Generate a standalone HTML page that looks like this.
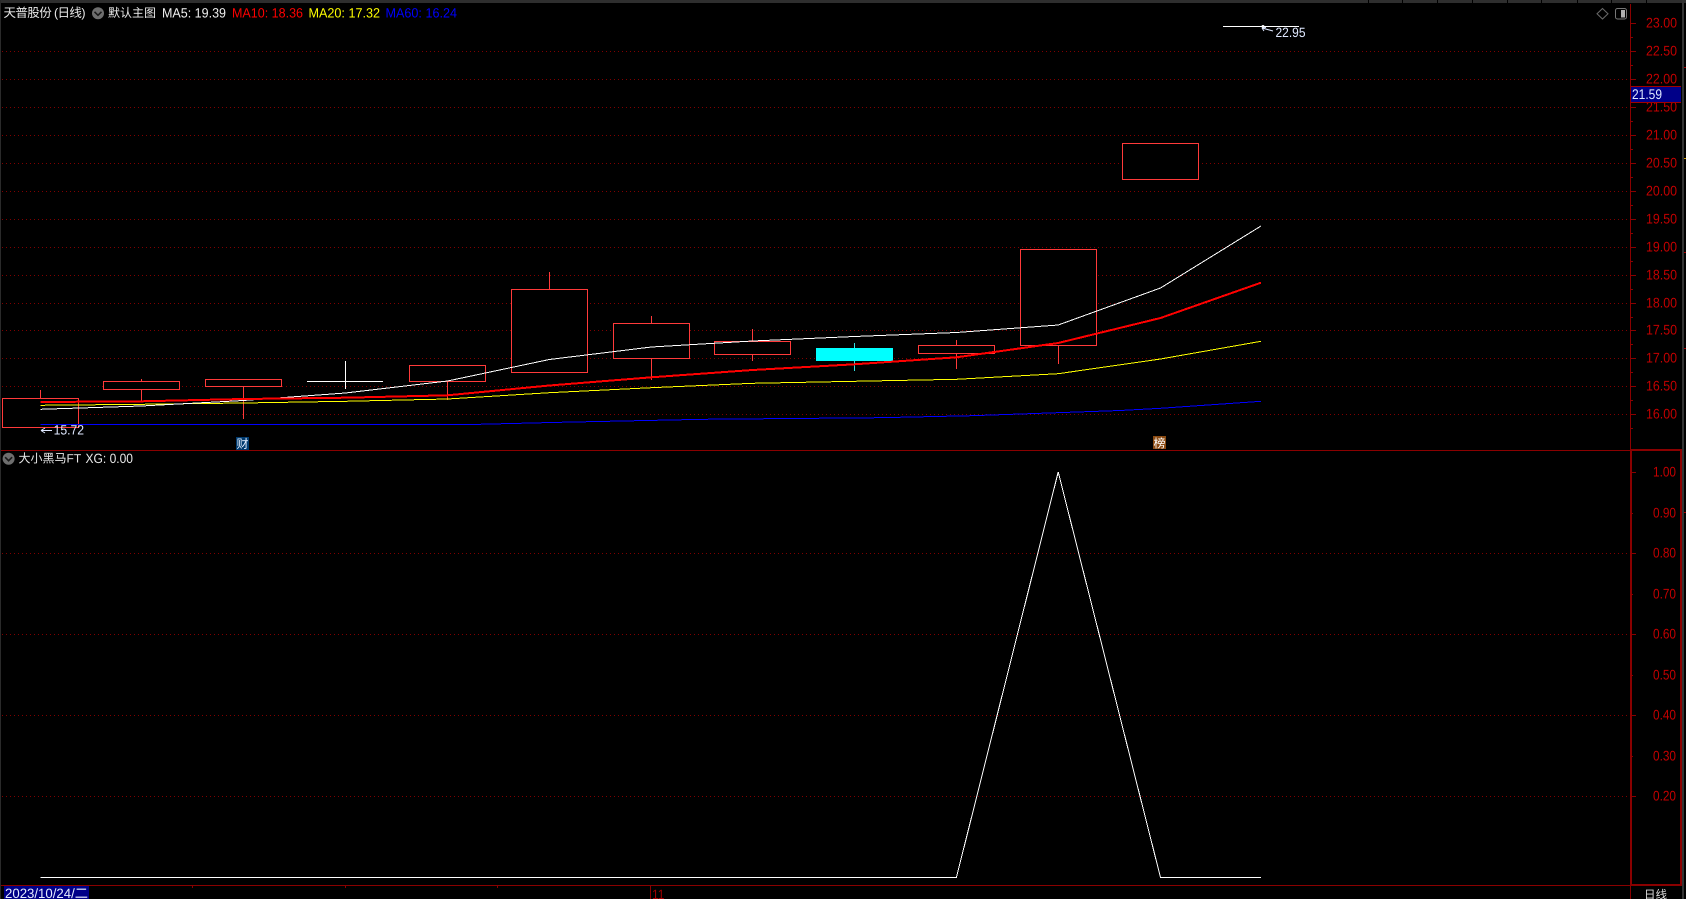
<!DOCTYPE html>
<html lang="zh">
<head>
<meta charset="utf-8">
<title>天普股份 (日线)</title>
<style>
html,body{margin:0;padding:0;background:#000;width:1686px;height:899px;overflow:hidden}
svg{display:block;position:absolute;left:0;top:0}
text{font-family:"Liberation Sans","Noto Sans CJK SC",sans-serif;font-size:13.5px;text-rendering:geometricPrecision}
.ax text{fill:#c40000;font-size:14px}
.c{stroke:#ff3a3a;fill:#000;stroke-width:1}
.w{stroke:#ff3a3a;stroke-width:1}
.g{stroke:#800000;stroke-width:1;stroke-dasharray:1 3}
.t{stroke:#8a0000;stroke-width:1}
.cr{shape-rendering:crispEdges}
</style>
</head>
<body>
<svg width="1686" height="899" viewBox="0 0 1686 899">
<rect width="1686" height="899" fill="#000"/>

<!-- window chrome -->
<g class="cr">
<rect x="0" y="0" width="1686" height="3" fill="#2e2e2e"/>
<rect x="0" y="0" width="1" height="899" fill="#2a2a2a"/>
<rect x="1682" y="0" width="2" height="899" fill="#333"/>
<g fill="#000">
<rect x="1368" y="0" width="1" height="3"/><rect x="1402" y="0" width="1" height="3"/><rect x="1437" y="0" width="1" height="3"/><rect x="1472" y="0" width="1" height="3"/><rect x="1507" y="0" width="1" height="3"/><rect x="1541" y="0" width="1" height="3"/><rect x="1577" y="0" width="1" height="3"/><rect x="1611" y="0" width="1" height="3"/><rect x="1646" y="0" width="1" height="3"/>
</g>
<rect x="1684" y="67" width="2" height="1" fill="#a00000"/>
<rect x="1684" y="158" width="2" height="1" fill="#d0a000"/>
<rect x="1684" y="252" width="2" height="1" fill="#a00000"/>
<rect x="1684" y="348" width="2" height="1" fill="#a00000"/>
<rect x="1684" y="512" width="2" height="1" fill="#a00000"/>
</g>

<!-- main grid -->
<g class="g cr">
<path d="M2 51.5H1630M2 79.5H1630M2 107.5H1630M2 135.5H1630M2 163.5H1630M2 191.5H1630M2 219.5H1630M2 247.5H1630M2 275.5H1630M2 303.5H1630M2 330.5H1630M2 358.5H1630M2 386.5H1630M2 414.5H1630"/>
<path d="M2 553.5H1630M2 634.5H1630M2 715.5H1630M2 796.5H1630"/>
</g>

<!-- axes -->
<g class="cr">
<rect x="1630" y="4" width="1" height="446" fill="#8a0000"/>
<rect x="1630" y="450" width="2" height="436" fill="#8a0000"/>
<rect x="1680" y="450" width="2" height="436" fill="#8a0000"/>
<rect x="1" y="450" width="1629" height="1" fill="#8a0000"/>
<rect x="1630" y="449" width="52" height="2" fill="#8a0000"/>
<rect x="1" y="885" width="1629" height="1" fill="#8a0000"/>
<rect x="1630" y="884" width="52" height="2" fill="#8a0000"/>
<rect x="1630" y="886" width="1" height="13" fill="#8a0000"/>
<rect x="650" y="886" width="1" height="13" fill="#8a0000"/>
<rect x="192" y="886" width="1" height="2" fill="#8a0000"/>
<rect x="345" y="886" width="1" height="2" fill="#8a0000"/>
<rect x="497" y="886" width="1" height="2" fill="#8a0000"/>
</g>
<g class="t cr">
<path d="M1631 23.5H1636M1631 51.5H1636M1631 79.5H1636M1631 107.5H1636M1631 135.5H1636M1631 163.5H1636M1631 191.5H1636M1631 219.5H1636M1631 247.5H1636M1631 275.5H1636M1631 303.5H1636M1631 330.5H1636M1631 358.5H1636M1631 386.5H1636M1631 414.5H1636"/>
<path d="M1631 37.5H1633M1631 65.5H1633M1631 93.5H1633M1631 121.5H1633M1631 149.5H1633M1631 177.5H1633M1631 205.5H1633M1631 233.5H1633M1631 261.5H1633M1631 289.5H1633M1631 317.5H1633M1631 344.5H1633M1631 372.5H1633M1631 400.5H1633M1631 428.5H1633"/>
<path d="M1631 472.5H1636M1631 553.5H1636M1631 634.5H1636M1631 715.5H1636M1631 796.5H1636"/>
<path d="M1631 513.5H1633M1631 594.5H1633M1631 675.5H1633M1631 756.5H1633"/>
</g>

<!-- axis labels -->
<g class="ax">
<text x="1646" y="27.5" textLength="31" lengthAdjust="spacingAndGlyphs">23.00</text>
<text x="1646" y="55.5" textLength="31" lengthAdjust="spacingAndGlyphs">22.50</text>
<text x="1646" y="83.5" textLength="31" lengthAdjust="spacingAndGlyphs">22.00</text>
<text x="1646" y="111.5" textLength="31" lengthAdjust="spacingAndGlyphs">21.50</text>
<text x="1646" y="139.5" textLength="31" lengthAdjust="spacingAndGlyphs">21.00</text>
<text x="1646" y="167.5" textLength="31" lengthAdjust="spacingAndGlyphs">20.50</text>
<text x="1646" y="195.5" textLength="31" lengthAdjust="spacingAndGlyphs">20.00</text>
<text x="1646" y="223.5" textLength="31" lengthAdjust="spacingAndGlyphs">19.50</text>
<text x="1646" y="251.5" textLength="31" lengthAdjust="spacingAndGlyphs">19.00</text>
<text x="1646" y="279.5" textLength="31" lengthAdjust="spacingAndGlyphs">18.50</text>
<text x="1646" y="307.5" textLength="31" lengthAdjust="spacingAndGlyphs">18.00</text>
<text x="1646" y="334.5" textLength="31" lengthAdjust="spacingAndGlyphs">17.50</text>
<text x="1646" y="362.5" textLength="31" lengthAdjust="spacingAndGlyphs">17.00</text>
<text x="1646" y="390.5" textLength="31" lengthAdjust="spacingAndGlyphs">16.50</text>
<text x="1646" y="418.5" textLength="31" lengthAdjust="spacingAndGlyphs">16.00</text>
<text x="1653" y="476.5" textLength="23" lengthAdjust="spacingAndGlyphs">1.00</text>
<text x="1653" y="517.5" textLength="23" lengthAdjust="spacingAndGlyphs">0.90</text>
<text x="1653" y="557.5" textLength="23" lengthAdjust="spacingAndGlyphs">0.80</text>
<text x="1653" y="598.5" textLength="23" lengthAdjust="spacingAndGlyphs">0.70</text>
<text x="1653" y="638.5" textLength="23" lengthAdjust="spacingAndGlyphs">0.60</text>
<text x="1653" y="679.5" textLength="23" lengthAdjust="spacingAndGlyphs">0.50</text>
<text x="1653" y="719.5" textLength="23" lengthAdjust="spacingAndGlyphs">0.40</text>
<text x="1653" y="760.5" textLength="23" lengthAdjust="spacingAndGlyphs">0.30</text>
<text x="1653" y="800.5" textLength="23" lengthAdjust="spacingAndGlyphs">0.20</text>
</g>

<!-- price box -->
<g class="cr">
<rect x="1631" y="87" width="50" height="15" fill="#000088"/>
<rect x="1631" y="86" width="50" height="1" fill="#a00000"/>
<rect x="1631" y="102" width="50" height="1" fill="#a00000"/>
</g>
<text x="1632" y="99" textLength="30" lengthAdjust="spacingAndGlyphs" fill="#dfe8ff" style="font-size:14px">21.59</text>

<!-- wicks -->
<g class="w cr">
<path d="M40.5 390V398"/>
<path d="M141.5 379V381M141.5 390V402"/>
<path d="M243.5 387V419"/>
<path d="M447.5 382V400"/>
<path d="M549.5 272V289"/>
<path d="M651.5 316V323M651.5 359V380"/>
<path d="M752.5 329V341M752.5 355V361"/>
<path d="M956.5 340V345M956.5 354V369"/>
<path d="M1058.5 346V364"/>
</g>
<path class="cr" d="M854.5 343V371" stroke="#33e0e0" stroke-width="1"/>

<!-- candle bodies -->
<g class="c cr">
<rect x="2.5" y="398.5" width="76" height="29"/>
<rect x="103.5" y="381.5" width="76" height="8"/>
<rect x="205.5" y="379.5" width="76" height="7"/>
<rect x="409.5" y="365.5" width="76" height="16"/>
<rect x="511.5" y="289.5" width="76" height="83"/>
<rect x="613.5" y="323.5" width="76" height="35"/>
<rect x="714.5" y="341.5" width="76" height="13"/>
<rect x="918.5" y="345.5" width="76" height="8"/>
<rect x="1020.5" y="249.5" width="76" height="96"/>
<rect x="1122.5" y="143.5" width="76" height="36"/>
</g>
<rect class="cr" x="816" y="348" width="77" height="13" fill="#00ffff"/>

<!-- doji -->
<g stroke="#fff" stroke-width="1" class="cr">
<path d="M307 381.5H383M345.5 361V389"/>
<path d="M1223 26.5H1299"/>
</g>

<!-- MA lines -->
<g fill="none" class="cr">
<polyline stroke="#0000ff" stroke-width="1" points="40.4,424.5 471,424.5 560,422.3 703,419.3 880,417.7 972,415.7 1120,410.5 1160.5,408.3 1261,401.3"/>
<polyline stroke="#ffff00" stroke-width="1" points="40.4,405.3 141.4,404.3 243.2,403 345.4,401.3 447.5,399 549.3,392.7 651.4,387.7 752.5,383.3 854.3,381.3 956.4,379.3 1058.2,373.7 1160.5,359 1261,341.3"/>
<polyline stroke="#ffffff" stroke-width="1" points="40.4,409.3 141.4,406 243.2,400.5 345.4,393 447.5,381 549.3,359.5 651.4,347 752.5,341 854.3,336.5 956.4,332.5 1058.2,325 1160.5,288 1261,226"/>
<polyline stroke="#ff0000" stroke-width="2" points="40.4,402 141.4,401.3 243.2,399 345.4,397.7 447.5,395.3 549.3,385.5 651.4,377.3 752.5,370 854.3,364.3 956.4,357.3 1058.2,343 1160.5,318 1261,282.7"/>
<polyline stroke="#ffffff" stroke-width="1" points="40.4,877.5 956.4,877.5 1058.2,472 1160.5,877.5 1261,877.5"/>
</g>

<!-- high/low labels -->
<path d="M41 430.5H52M41 430.5L45 428M41 430.5L45 433" stroke="#dfe8ff" stroke-width="1" fill="none"/>
<text x="53.6" y="434.5" textLength="30.5" lengthAdjust="spacingAndGlyphs" fill="#dfe8ff">15.72</text>
<circle cx="1263" cy="26.5" r="1.5" fill="#fff"/>
<path d="M1262 28L1273 31M1262 28L1266 27.5M1262 28L1264 31" stroke="#dfe8ff" stroke-width="1" fill="none"/>
<text x="1275.5" y="37" textLength="30" lengthAdjust="spacingAndGlyphs" fill="#dfe8ff">22.95</text>

<!-- flags -->
<rect x="236" y="437" width="13" height="13" fill="#003a6e"/>
<text x="236.5" y="448" fill="#e6f0ff" style="font-size:12px">财</text>
<rect x="1153" y="436" width="13" height="13" fill="#8a4a12"/>
<text x="1153.5" y="447.5" fill="#fff" style="font-size:12px">榜</text>

<!-- header legend -->
<text x="3.5" y="17" textLength="82" fill="#e8e8e8" style="font-size:12.5px">天普股份 (日线)</text>
<circle cx="98" cy="13.3" r="6" fill="#6e6e6e"/>
<path d="M94.5 11.8L98 15.3L101.5 11.8" stroke="#1a1a1a" stroke-width="1.6" fill="none"/>
<text x="108" y="17" fill="#e8e8e8" style="font-size:12px">默认主图</text>
<text x="162" y="17.5" textLength="64" lengthAdjust="spacingAndGlyphs" fill="#f0f0f0">MA5: 19.39</text>
<text x="232" y="17.5" textLength="71" lengthAdjust="spacingAndGlyphs" fill="#ff0000">MA10: 18.36</text>
<text x="308.5" y="17.5" textLength="71.5" lengthAdjust="spacingAndGlyphs" fill="#ffff00">MA20: 17.32</text>
<text x="385.5" y="17.5" textLength="71.5" lengthAdjust="spacingAndGlyphs" fill="#0000ff">MA60: 16.24</text>

<!-- top right icons -->
<path d="M1602.5 8.5L1608 13.8L1602.5 19L1597 13.8Z" fill="none" stroke="#6a6a6a" stroke-width="1"/>
<rect x="1615.5" y="8.5" width="11" height="10.5" rx="2" fill="none" stroke="#777" stroke-width="1"/>
<rect x="1621" y="10" width="4" height="7.5" fill="#b0b0b0"/>

<!-- indicator legend -->
<circle cx="8.6" cy="458.7" r="6" fill="#6e6e6e"/>
<path d="M5.1 457.2L8.6 460.7L12.1 457.2" stroke="#1a1a1a" stroke-width="1.6" fill="none"/>
<text x="18.5" y="462.5" fill="#e8e8e8" style="font-size:12px">大小黑马FT</text>
<text x="85.5" y="463" textLength="47.5" lengthAdjust="spacingAndGlyphs" fill="#e8e8e8">XG: 0.00</text>

<!-- bottom bar -->
<rect class="cr" x="4" y="886" width="85" height="13" fill="#000088"/>
<text x="5" y="898" textLength="83" lengthAdjust="spacingAndGlyphs" fill="#e6ecff">2023/10/24/二</text>
<text x="652" y="899" textLength="12.5" lengthAdjust="spacingAndGlyphs" fill="#a00000">11</text>
<text x="1644" y="898.5" fill="#dcdcdc" style="font-size:11.5px">日线</text>
</svg>
</body>
</html>
